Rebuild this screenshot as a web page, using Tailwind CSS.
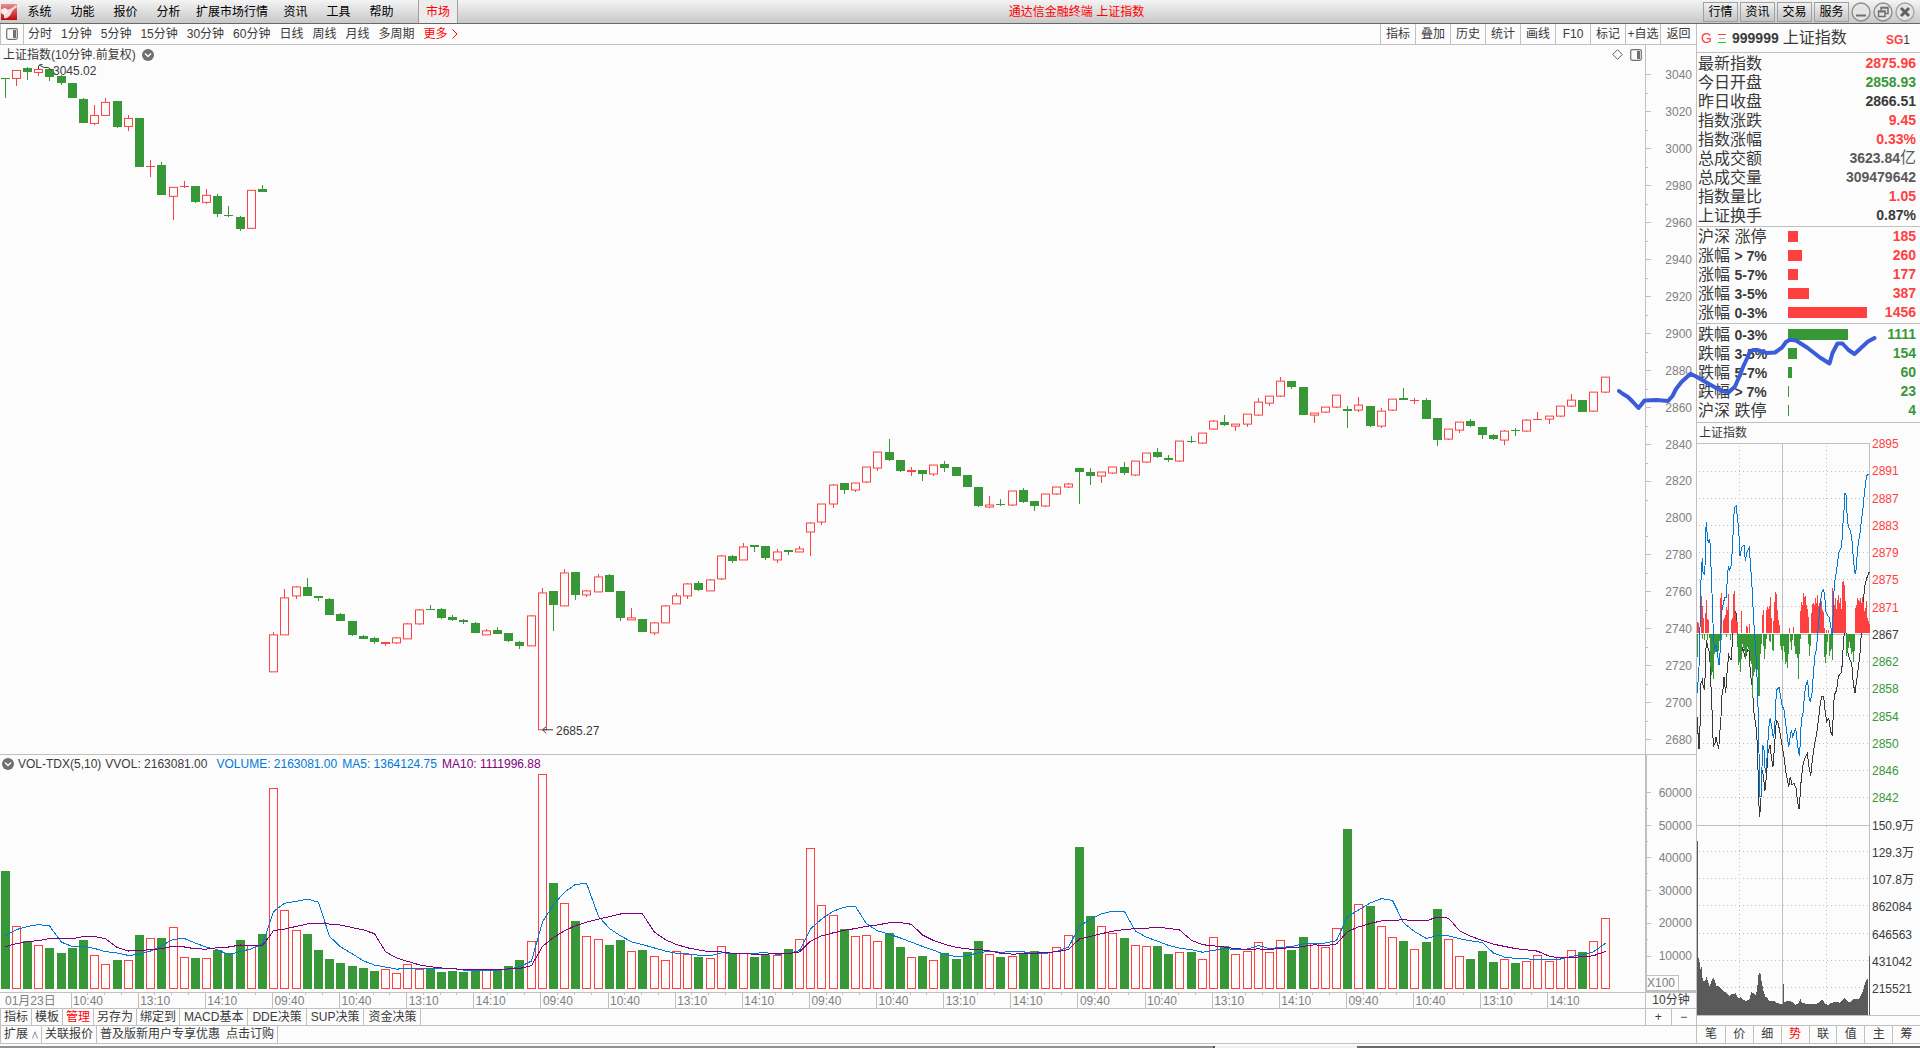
<!DOCTYPE html>
<html lang="zh-CN">
<head>
    <meta charset="UTF-8">
    <meta name="viewport" content="width=device-width, initial-scale=1.0">
    <title>通达信金融终端 上证指数</title>
    <script src="https://cdn.jsdelivr.net/npm/@tailwindcss/browser@4"></script>
    <style>
        body {
            font-family: 'Liberation Sans', 'Noto Sans CJK SC', sans-serif;
        }
    </style>
</head>
<body class="bg-[#fcfcfc] text-[#3a3a3a] text-xs leading-4 h-screen flex flex-col overflow-hidden">

    <!-- Menu bar -->
    <header class="h-6 shrink-0 flex items-center bg-linear-to-b from-[#f4f4f4] to-[#c8c8c8] border-b border-[#686868] text-black">
        <svg class="w-[18px] h-[18px] shrink-0" viewBox="0 0 18 18" role="img" aria-label="通达信">
            <defs>
                <linearGradient id="logo-bg" x1="0" y1="0" x2="0" y2="1">
                    <stop offset="0" stop-color="#e89090"/>
                    <stop offset="1" stop-color="#c00808"/>
                </linearGradient>
            </defs>
            <rect x="1" y="1" width="16" height="16" fill="url(#logo-bg)"/>
            <path d="M1 7 L5 5 Q8 9 16 2 L17 4 Q12 7 11 11 Q8 16 4 15 L4 12 L1 10 Z" fill="#f2dede"/>
            <path d="M1 6 L6 5 L8 9 L4 12 Z" fill="#fff" opacity=".6"/>
        </svg>
        <nav class="flex h-full items-center">
            <button class="w-[43px]">系统</button>
            <button class="w-[43px]">功能</button>
            <button class="w-[43px]">报价</button>
            <button class="w-[43px]">分析</button>
            <button class="w-[84px]">扩展市场行情</button>
            <button class="w-[43px]">资讯</button>
            <button class="w-[43px]">工具</button>
            <button class="w-[43px]">帮助</button>
            <button class="w-10 h-full ml-[15px] border-x border-[#a0a0a0] bg-[#ececec] text-[#ff0000]">市场</button>
        </nav>
        <h1 class="flex-1 text-center pr-2 text-[#ff0000]">通达信金融终端 上证指数</h1>
        <div class="flex items-center gap-[2px] pr-[5px]">
            <button class="w-[35px] h-5 border border-[#a0a0a0] bg-linear-to-b from-[#f0f0f0] to-[#c4c4c4]">行情</button>
            <button class="w-[35px] h-5 border border-[#a0a0a0] bg-linear-to-b from-[#f0f0f0] to-[#c4c4c4]">资讯</button>
            <button class="w-[35px] h-5 border border-[#a0a0a0] bg-linear-to-b from-[#f0f0f0] to-[#c4c4c4]">交易</button>
            <button class="w-[35px] h-5 border border-[#a0a0a0] bg-linear-to-b from-[#f0f0f0] to-[#c4c4c4]">服务</button>
            <button class="w-5 h-5" aria-label="最小化">
                <svg viewBox="0 0 20 20" fill="none" stroke="#8c8c8c">
                    <circle cx="10" cy="10" r="9" fill="#e4e4e4" stroke-width="1.4"/>
                    <path d="M5 13.5h10" stroke="#707070" stroke-width="2"/>
                </svg>
            </button>
            <button class="w-5 h-5" aria-label="还原">
                <svg viewBox="0 0 20 20" fill="none" stroke="#8c8c8c">
                    <circle cx="10" cy="10" r="9" fill="#e4e4e4" stroke-width="1.4"/>
                    <path d="M8 8.5V5.5h7v6h-3M8 6h7" stroke="#707070" stroke-width="1.5"/>
                    <path d="M5.500 9h6.500v5.500h-6.500zM5.500 9.700h6.500" stroke="#707070" stroke-width="1.5"/>
                </svg>
            </button>
            <button class="w-5 h-5" aria-label="关闭">
                <svg viewBox="0 0 20 20" fill="none" stroke="#a4a4a4">
                    <circle cx="10" cy="10" r="9" fill="#e4e4e4" stroke-width="1.4"/>
                    <path d="M6 6l8 8M14 6l-8 8" stroke="#606060" stroke-width="3"/>
                </svg>
            </button>
        </div>
    </header>

    <div class="relative flex-1 min-h-0 flex">
        <main class="flex-1 min-w-0 flex flex-col">

            <!-- Period toolbar -->
            <div class="h-[21px] shrink-0 flex items-center justify-between border-b border-[#c0c0c0]">
                <div class="flex items-center gap-[9px] h-full">
                    <button class="w-6 h-full border-x border-[#c0c0c0] flex items-center justify-center -mr-[5px]" aria-label="侧栏">
                        <svg class="w-3 h-3" viewBox="0 0 12 12"><rect x=".7" y=".7" width="10.600" height="10.600" rx="1.500" fill="none" stroke="#707070" stroke-width="1.2"/><rect x="7" y="2" width="3" height="8" fill="#707070"/></svg>
                    </button>
                    <button>分时</button>
                    <button>1分钟</button>
                    <button>5分钟</button>
                    <button>15分钟</button>
                    <button>30分钟</button>
                    <button>60分钟</button>
                    <button>日线</button>
                    <button>周线</button>
                    <button>月线</button>
                    <button>多周期</button>
                    <button class="flex items-center gap-1 text-[#ff0000]">更多
                        <svg class="w-[6px] h-[10px]" viewBox="0 0 6 10" fill="none" stroke="#ff0000"><path d="M.5.500L5 5 .5 9.500"/></svg>
                    </button>
                </div>
                <div class="flex h-full">
                    <button class="w-[35px] border-l border-[#c0c0c0]">指标</button>
                    <button class="w-[35px] border-l border-[#c0c0c0]">叠加</button>
                    <button class="w-[35px] border-l border-[#c0c0c0]">历史</button>
                    <button class="w-[35px] border-l border-[#c0c0c0]">统计</button>
                    <button class="w-[35px] border-l border-[#c0c0c0]">画线</button>
                    <button class="w-[35px] border-l border-[#c0c0c0]">F10</button>
                    <button class="w-[35px] border-l border-[#c0c0c0]">标记</button>
                    <button class="w-[35px] border-l border-[#c0c0c0] whitespace-nowrap">+自选</button>
                    <button class="w-9 border-l border-[#c0c0c0]">返回</button>
                </div>
            </div>

            <!-- Candles -->
            <section class="flex-[710] min-h-0 flex">
                <div class="relative flex-1 min-w-0">
                    <svg id="candles" class="absolute inset-0 w-full h-full" viewBox="0 45 1645 710" preserveAspectRatio="none" shape-rendering="crispEdges"></svg>
                    <div class="relative flex items-center justify-between h-[19px] pl-[3px] pr-[3px]">
                        <div class="flex items-center gap-[6px]">
                            <h2>上证指数(10分钟.前复权)</h2>
                            <svg class="w-3 h-3" viewBox="0 0 12 12"><circle cx="6" cy="6" r="6" fill="#707070"/><path d="M3 4.500l3 3 3-3" fill="none" stroke="#fff" stroke-width="1.4"/></svg>
                        </div>
                        <div class="flex items-center gap-[7px]">
                            <svg class="w-[11px] h-[11px]" viewBox="0 0 11 11"><path d="M5.500.700l4.800 4.800-4.800 4.800L.7 5.500z" fill="none" stroke="#606060"/></svg>
                            <svg class="w-3 h-3" viewBox="0 0 12 12"><rect x=".7" y=".7" width="10.600" height="10.600" rx="1.500" fill="none" stroke="#707070" stroke-width="1.2"/><rect x="7" y="2" width="3" height="8" fill="#707070"/></svg>
                        </div>
                    </div>
                    <span class="absolute left-[53px] top-[18px]">3045.02</span>
                    <span class="absolute left-[33.800%] top-[95.600%]">2685.27</span>
                </div>
                <div class="w-[51px] shrink-0 flex border-l border-[#c0c0c0]">
                    <svg id="price-ticks" class="w-[6px] h-full" viewBox="0 45 6 710" preserveAspectRatio="none" shape-rendering="crispEdges"></svg>
                    <ul id="price-labels" class="flex-1 flex flex-col justify-between items-end pt-[22px] pb-[6px] pr-[4px] text-[#808080]"></ul>
                </div>
            </section>

            <!-- Volume -->
            <section class="flex-[237] min-h-0 flex border-t border-[#c0c0c0]">
                <div class="relative flex-1 min-w-0">
                    <svg id="volumes" class="absolute inset-0 w-full h-full" viewBox="0 756 1645 236" preserveAspectRatio="none" shape-rendering="crispEdges"></svg>
                    <div class="relative flex items-center pl-[2px] pt-px whitespace-nowrap">
                        <svg class="w-3 h-3 mr-1" viewBox="0 0 12 12"><circle cx="6" cy="6" r="6" fill="#707070"/><path d="M3 4.500l3 3 3-3" fill="none" stroke="#fff" stroke-width="1.4"/></svg>
                        <span class="mr-1">VOL-TDX(5,10)</span>
                        <span class="mr-[9px]">VVOL: 2163081.00</span>
                        <span class="mr-[5px] text-[#0078d7]">VOLUME: 2163081.00</span>
                        <span class="mr-[5px] text-[#0078d7]">MA5: 1364124.75</span>
                        <span class="text-[#800080]">MA10: 1111996.88</span>
                    </div>
                </div>
                <div class="w-[51px] shrink-0 flex border-l-2 border-b-2 border-[#c0c0c0] relative">
                    <svg id="vol-ticks" class="w-[5px] h-full" viewBox="0 756 5 234" preserveAspectRatio="none" shape-rendering="crispEdges"></svg>
                    <ul id="vol-labels" class="flex-1 flex flex-col justify-between items-end pt-[30px] pb-[26px] pr-[4px] text-[#808080]"></ul>
                    <span class="absolute left-0 bottom-0 border-t border-r border-[#c0c0c0] text-[#808080] h-[15px] leading-[15px] w-8 bg-[#fcfcfc]">X100</span>
                </div>
            </section>

            <!-- Time axis -->
            <div class="h-[17px] shrink-0 flex border-y border-[#c0c0c0]">
                <div class="relative flex-1 min-w-0 text-[#808080]">
                    <svg id="time-ticks" class="absolute inset-0 w-full h-full" viewBox="0 0 1645 15" preserveAspectRatio="none" shape-rendering="crispEdges"></svg>
                    <ol id="time-labels" class="relative flex h-full items-center leading-4"></ol>
                </div>
                <button class="w-[51px] shrink-0 border-l border-[#c0c0c0] leading-[15px] whitespace-nowrap">10分钟</button>
            </div>

            <!-- Indicator templates -->
            <div class="h-[17px] shrink-0 flex justify-between border-b border-[#c0c0c0] leading-4">
                <div class="flex border-l border-[#c0c0c0]">
                    <button class="px-[3px] border-r border-[#c0c0c0]">指标</button>
                    <button class="px-[3px] border-r border-[#c0c0c0]">模板</button>
                    <button class="px-[3px] border-r border-[#c0c0c0] text-[#ff0000]">管理</button>
                    <button class="px-[3px] border-r border-[#c0c0c0]">另存为</button>
                    <button class="px-[3px] border-r border-[#c0c0c0]">绑定到</button>
                    <button class="px-1 border-r border-[#c0c0c0]">MACD基本</button>
                    <button class="px-1 border-r border-[#c0c0c0]">DDE决策</button>
                    <button class="px-1 border-r border-[#c0c0c0]">SUP决策</button>
                    <button class="px-1 border-r border-[#c0c0c0]">资金决策</button>
                </div>
                <div class="w-[51px] grid grid-cols-2">
                    <button class="border-l border-[#c0c0c0]" aria-label="放大">+</button>
                    <button class="border-l border-[#c0c0c0]" aria-label="缩小">−</button>
                </div>
            </div>

            <div class="h-[17px] shrink-0 flex border-l border-[#c0c0c0] leading-[17px]">
                <button class="px-[3px] border-r border-[#c0c0c0] flex items-center gap-1">扩展
                    <svg class="w-[6px] h-2" viewBox="0 0 6 8" fill="none" stroke="#909090"><path d="M.5 7.500L3 .8l2.500 6.700"/></svg>
                </button>
                <a href="#" class="px-[3px] border-r border-[#c0c0c0]">关联报价</a>
                <a href="#" class="px-[3px] border-r border-[#c0c0c0] flex gap-[6px]"><span>普及版新用户专享优惠</span><span>点击订购</span></a>
            </div>
        </main>

        <!-- Quote sidebar -->
        <aside class="w-56 shrink-0 flex flex-col border-l border-[#c0c0c0]">
            <div class="h-[29px] shrink-0 flex items-center border-b border-[#c0c0c0] pl-1 pr-[10px]">
                <span class="text-sm text-[#ff4040] w-[17px]">G</span>
                <svg class="w-2 h-[11px] mr-[6px]" viewBox="0 0 8 11" shape-rendering="crispEdges"><path d="M0 1.500h8" stroke="#ff4040"/><path d="M1 5.500h6" stroke="#c0a0a0"/><path d="M0 9.500h8" stroke="#00e000"/></svg>
                <span class="text-sm font-bold mr-1">999999</span>
                <span class="text-base">上证指数</span>
                <span class="ml-auto pt-1"><b class="text-[#ff4040]">SG</b>1</span>
            </div>

            <div class="shrink-0 border-b border-[#c0c0c0] pt-px pb-px">
                <table class="w-full">
                    <tbody id="quote"></tbody>
                </table>
            </div>
            <div class="shrink-0 border-b border-[#c0c0c0] pb-px">
                <table class="w-full">
                    <tbody id="risers"></tbody>
                </table>
            </div>
            <div class="shrink-0 border-b border-[#c0c0c0] pt-px pb-[2px]">
                <table class="w-full">
                    <tbody id="fallers"></tbody>
                </table>
            </div>

            <h3 class="h-5 shrink-0 pl-[2px] leading-5">上证指数</h3>
            <div class="flex-1 min-h-0 flex border-b border-[#c0c0c0]">
                <svg id="intraday" class="flex-1 min-w-0 h-full" viewBox="1697 443 173 572" preserveAspectRatio="none" shape-rendering="crispEdges"></svg>
                <ul id="intraday-labels" class="w-[50px] flex flex-col justify-between pl-[2px] pb-[18px] -mt-[7px]"></ul>
            </div>
            <div class="h-[10px] shrink-0 border-b border-[#c0c0c0]"></div>
            <div class="h-[17px] shrink-0 grid grid-cols-8 leading-[17px]">
                <button>笔</button>
                <button class="border-l border-[#c0c0c0]">价</button>
                <button class="border-l border-[#c0c0c0]">细</button>
                <button class="border-l border-[#c0c0c0] text-[#ff0000]">势</button>
                <button class="border-l border-[#c0c0c0]">联</button>
                <button class="border-l border-[#c0c0c0]">值</button>
                <button class="border-l border-[#c0c0c0]">主</button>
                <button class="border-l border-[#c0c0c0]">筹</button>
            </div>
        </aside>

        <!-- Freehand pen stroke over the chart and the sidebar -->
        <svg class="absolute inset-0 w-full h-full pointer-events-none" viewBox="0 24 1920 1019" preserveAspectRatio="none" fill="none">
            <path d="M1619 391L1623 394L1628 397L1633 402L1638.500 408L1641 405L1644.500 400.500L1657 400L1668 401L1672.500 396L1676 389L1681.500 382L1690.500 373.700L1697 377L1703 380.500L1717 388.500L1724 391.500L1729 392L1735 386.500L1740 375L1743 367L1747 358.500L1750 351.500L1753 350L1757 350L1767 353L1775 352.500L1782 347.500L1786 342L1790 339.700L1796 340.500L1807 347.500L1820 357.500L1829.500 363.500L1830.500 360L1832.500 353L1837.500 343.500L1842.500 343.500L1848.500 350L1854.500 354L1861.500 347.500L1868 341.500L1874.500 338" stroke="#3a5cd8" stroke-width="4" stroke-linejoin="round" stroke-linecap="round"/>
        </svg>
    </div>

    <footer class="h-[5px] shrink-0 border-t border-[#c0c0c0] flex flex-col justify-end">
        <div class="h-[2px] bg-[#909090] flex"><span class="w-[63.300%] border-r-2 border-[#505050]"></span><span class="w-[7.400%] bg-[#f0f0f0]"></span><span class="flex-1 bg-[#686868]"></span></div>
    </footer>

    <script>
        const RED = '#ff4040';
        const GREEN = '#389838';
        const BLUE = '#0078d7';
        const PURPLE = '#800080';
        const GRID = '#c0c0c0';

        // colour, body top, body bottom, high, low, volume top
        const bars = `
g 78 79 78 98 872|r 70 79 70 86 926|g 68 72 67 80 941|r 69 73 67 76 945|g 69 77 69 81 948|g 76 83 75 85 953
g 83 98 83 98 948|g 99 123 98 123 940|r 115 124 105 125 955|r 102 116 98 116 964|g 101 127 101 128 960|r 118 127 115 131 960
g 118 167 118 167 935|r 166 167 160 177 938|g 165 195 162 195 938|r 187 197 187 220 927|r 186 187 181 188 957|g 186 202 186 203 958
r 195 203 189 204 958|g 196 214 194 217 950|g 215 216 206 217 953|g 217 229 216 231 940|r 190 229 190 229 945|g 189 192 185 192 934
r 635 673 633 673 789|r 598 636 590 636 911|r 587 597 587 600 930|g 588 597 579 597 934|g 597 599 597 602 950|g 600 616 599 616 959
g 615 622 614 622 963|g 622 636 622 637 966|g 637 640 636 640 968|g 639 643 638 645 971|r 643 645 643 647 969|r 638 644 638 645 973
r 624 640 624 640 964|r 610 625 610 626 969|g 610 611 606 611 968|g 610 619 609 620 972|g 618 621 616 622 971|g 621 623 620 625 972
g 624 634 623 634 970|r 631 636 630 636 970|g 631 635 628 635 970|g 634 642 634 643 966|g 643 647 642 650 960|r 616 647 616 647 941
r 593 731 589 731 775|g 592 606 592 632 884|r 573 607 570 607 904|g 573 596 573 601 921|r 591 596 591 598 936|r 577 593 575 593 939
g 576 593 575 593 945|g 592 619 592 622 940|r 618 621 609 621 951|g 620 633 620 633 950|r 623 634 623 636 956|r 606 624 606 624 960
r 596 605 594 605 951|r 584 597 584 600 954|g 584 591 582 592 957|r 580 592 580 592 958|r 556 580 556 581 946|g 557 562 556 564 954
r 547 561 544 561 953|g 546 548 546 553 957|g 547 559 547 561 955|r 552 561 550 564 955|g 551 553 551 556 949|r 549 553 547 553 939
r 523 533 523 557 849|r 504 523 504 526 906|r 485 505 484 508 915|g 483 490 483 494 929|r 483 491 483 492 936|r 467 483 467 483 935
r 452 469 452 471 941|g 452 460 439 461 933|g 460 471 460 472 947|r 470 472 467 476 957|g 470 474 470 481 956|r 465 475 465 476 960
g 464 468 461 472 953|g 467 476 467 476 959|g 475 487 475 487 952|g 487 506 487 507 941|r 505 508 496 508 954|g 504 505 499 506 957
r 491 506 491 506 956|g 490 502 488 503 953|g 501 506 501 511 951|r 494 507 494 507 952|r 487 495 487 495 947|r 484 488 483 488 935
g 468 472 468 504 848|g 472 476 468 485 916|r 472 477 472 483 926|r 467 474 467 474 933|g 467 473 462 475 938|r 461 476 461 476 945
r 453 463 453 463 946|g 452 457 448 458 946|g 458 460 455 462 954|r 441 462 441 462 952|g 441 442 436 443 952|r 433 444 433 444 959
r 421 430 420 430 937|g 422 425 415 426 946|r 424 427 424 431 954|r 414 425 414 427 951|r 402 416 398 416 942|r 396 404 396 406 952
r 381 397 377 397 940|g 381 387 381 389 950|g 387 415 387 415 937|r 413 416 413 423 943|r 407 413 407 413 947|r 395 408 395 408 928
g 409 411 406 428 830|r 405 411 397 412 905|g 406 426 406 427 907|r 411 427 408 428 926|r 399 411 399 411 937|g 398 400 388 400 941
r 400 401 398 404 949|g 400 419 398 419 942|g 418 440 418 446 910|r 429 440 429 440 939|r 422 431 422 433 956|g 421 426 419 427 959
g 427 435 427 439 951|g 435 439 434 440 962|r 431 441 430 445 959|g 430 431 428 436 963|r 420 432 419 432 961|r 419 420 412 420 955
r 416 420 416 424 961|r 406 417 406 417 957|r 400 407 394 407 950|g 400 412 400 412 952|r 392 412 392 412 941|r 377 393 377 393 918`
            .trim().split(/[|\n]/).map(row => {
                const [side, ...n] = row.trim().split(' ');
                const [top, bottom, high, low, vol] = n.map(Number);
                return { side, top, bottom, high, low, vol };
            });

        const VOL_BASE = 989;
        const centerX = i => Math.floor(5.2 + 11.188 * i);

        const el = id => document.getElementById(id);
        const rect = (x, y, w, h, fill) => `<rect x="${x}" y="${y}" width="${w}" height="${h}" fill="${fill}"/>`;
        const box = (x, y, w, h, stroke) => `<rect x="${x + 0.5}" y="${y + 0.5}" width="${w - 1}" height="${Math.max(h - 1, 0.01)}" fill="#fcfcfc" stroke="${stroke}"/>`;
        const line = (points, stroke) => `<polyline points="${points}" fill="none" stroke="${stroke}"/>`;

        function drawCandles() {
            let out = '';
            bars.forEach((b, i) => {
                const x = centerX(i);
                const color = b.side === 'r' ? RED : GREEN;
                out += rect(x, b.high, 1, b.low - b.high, color);
                out += b.side === 'r' && b.bottom - b.top > 2
                    ? box(x - 4, b.top, 9, b.bottom - b.top, color)
                    : rect(x - 4, b.top, 9, b.bottom - b.top, color);
            });
            // high and low markers
            out += '<path d="M38.500 69V66l2-1.500h2M39 65l5 2.500h4l4 3" fill="none" stroke="#3a3a3a"/>';
            out += '<path d="M553 730.500H543M546 727.500l-3.500 3 3.500 3.500" fill="none" stroke="#3a3a3a"/>';
            el('candles').innerHTML = out;
        }

        function average(n, start) {
            return bars.map((b, i) => {
                let y = start[i];
                if (y === undefined) {
                    y = bars.slice(i - n + 1, i + 1).reduce((sum, v) => sum + v.vol, 0) / n;
                }
                return `${centerX(i) + 0.5},${y.toFixed(1)}`;
            }).join(' ');
        }

        function drawVolumes() {
            let out = '';
            bars.forEach((b, i) => {
                const x = centerX(i) - 4;
                out += b.side === 'r' ? box(x, b.vol, 9, VOL_BASE - b.vol, RED) : rect(x, b.vol, 9, VOL_BASE - b.vol, GREEN);
            });
            out += line(average(5, [936, 930, 927, 925]), BLUE);
            out += line(average(10, [947, 944, 942, 941, 939, 939, 939, 937, 937]), PURPLE);
            el('volumes').innerHTML = out;
        }

        function drawAxes() {
            let ticks = '';
            let labels = '';
            for (let k = 0; k < 19; k++) {
                ticks += rect(0, 74 + 37 * k, 5, 1, GRID);
                if (k < 18) ticks += rect(0, 93 + 37 * k, 2, 1, GRID);
                labels += `<li>${3040 - 20 * k}</li>`;
            }
            el('price-ticks').innerHTML = ticks;
            el('price-labels').innerHTML = labels;

            ticks = '';
            labels = '';
            for (let k = 0; k < 6; k++) {
                ticks += rect(0, Math.round(793 + 32.5 * k), 4, 1, GRID);
                if (k < 5) ticks += rect(0, Math.round(809 + 32.5 * k), 1, 1, GRID);
                labels += `<li>${60000 - 10000 * k}</li>`;
            }
            el('vol-ticks').innerHTML = ticks;
            el('vol-labels').innerHTML = labels;

            const hours = ['10:40', '13:10', '14:10', '09:40'];
            ticks = '';
            labels = `<li class="shrink-0 pl-[5px]" style="width:${71 / 16.45}%">01月23日</li>`;
            for (let k = 0; k < 23; k++) {
                const x = 71 + 67.13 * k;
                ticks += rect(Math.floor(x), 0, 1, 15, GRID);
                for (let m = 1; m < 4 && k < 22; m++) ticks += rect(Math.floor(x + 16.78 * m), 0, 1, 2, GRID);
                labels += `<li class="shrink-0 pl-[2px]" style="width:${67.13 / 16.45}%">${hours[k % 4]}</li>`;
            }
            el('time-ticks').innerHTML = ticks;
            el('time-labels').innerHTML = labels;
        }

        function fillTables() {
            const quote = [
                ['最新指数', '2875.96', 'text-[#ff4040]'],
                ['今日开盘', '2858.93', 'text-[#389838]'],
                ['昨日收盘', '2866.51', ''],
                ['指数涨跌', '9.45', 'text-[#ff4040]'],
                ['指数涨幅', '0.33%', 'text-[#ff4040]'],
                ['总成交额', '3623.84<span class="text-base leading-none font-normal">亿</span>', 'text-[#5a5a5a]'],
                ['总成交量', '309479642', 'text-[#5a5a5a]'],
                ['指数量比', '1.05', 'text-[#ff4040]'],
                ['上证换手', '0.87%', ''],
            ];
            el('quote').innerHTML = quote.map(([name, value, color]) => `
                <tr class="h-[19px] leading-[19px]">
                    <th class="text-left font-normal text-base leading-[19px] pl-px">${name}</th>
                    <td class="text-right font-bold text-sm leading-[19px] pr-1 ${color}">${value}</td>
                </tr>`).join('');

            const spread = (rows, color, fill) => rows.map(([name, range, width, count]) => `
                <tr class="h-[19px]">
                    <th class="w-[91px] text-left font-normal text-base leading-[19px] pl-px whitespace-nowrap">${name} ${/\d/.test(range) ? `<b class="text-sm leading-none">${range}</b>` : range}</th>
                    <td><div class="h-[11px] ${fill}" style="width:${width}px"></div></td>
                    <td class="text-right font-bold text-sm leading-[19px] pr-1 ${color}">${count}</td>
                </tr>`).join('');
            el('risers').innerHTML = spread([
                ['沪深', '涨停', 10, 185],
                ['涨幅', '&gt; 7%', 14, 260],
                ['涨幅', '5-7%', 10, 177],
                ['涨幅', '3-5%', 21, 387],
                ['涨幅', '0-3%', 79, 1456],
            ], 'text-[#ff4040]', 'bg-[#ff4040]');
            el('fallers').innerHTML = spread([
                ['跌幅', '0-3%', 60, 1111],
                ['跌幅', '3-5%', 9, 154],
                ['跌幅', '5-7%', 4, 60],
                ['跌幅', '&gt; 7%', 1, 23],
                ['沪深', '跌停', 1, 4],
            ], 'text-[#389838]', 'bg-[#389838]');
        }

        // offset from the open : height
        const buys = '0:11 1:10 4:37 5:27 6:15 8:20 9:33 10:14 11:13 23:35 24:40 26:13 27:15 28:18 29:26 30:23 31:39 34:13 35:15 36:39 37:42 38:20 39:12 40:11 44:22 49:7 50:6 52:9 65:18 66:23 69:23 70:26 71:24 72:27 73:36 74:15 76:12 77:31 78:41 79:39 80:23 81:13 82:8 92:5 96:6 103:22 104:31 105:28 106:40 107:36 108:37 109:28 110:24 111:16 114:20 115:29 116:30 117:28 118:35 119:30 120:38 121:27 122:30 123:33 124:32 125:23 126:21 127:5 129:3 131:3 135:45 136:29 137:28 138:35 139:24 140:33 141:38 142:30 143:35 144:24 145:51 146:52 147:48 148:32 158:25 159:28 160:35 161:33 162:32 163:35 164:30 165:36 166:31 167:22 168:25 169:32 170:15 171:12 172:9';
        const sells = '0:23 5:5 7:6 10:6 12:4 13:33 14:41 15:38 16:45 17:20 18:18 19:16 20:17 21:17 22:7 24:6 29:3 33:6 40:13 41:31 42:28 43:38 44:25 45:10 46:14 47:17 48:25 49:20 50:13 51:15 52:17 53:27 54:30 55:63 56:42 57:38 58:35 59:30 60:36 61:62 62:62 63:20 64:10 66:12 67:25 68:15 69:5 72:7 73:8 75:16 76:17 83:12 84:16 85:26 86:12 87:18 88:30 89:28 90:34 91:20 93:8 94:16 95:6 97:12 98:20 99:20 100:24 101:45 102:20 103:5 111:10 112:22 113:12 127:23 128:29 129:20 130:8 132:22 133:17 134:15 135:26 149:22 150:18 151:14 152:8 153:14 154:20 155:18 156:28 157:17';
        const lead = '52,820 53,800 57,740 59,700 60,620 62,500 65,440 67,415 69,455 73,465 75,440 77,340 79,305 82,350 85,370 88,358 91,372 93,440 96,520 99,610 103,690 108,675 112,700 117,735 120,700 123,620 126,570 130,550 135,530 138,535 142,480 145,437 149,450 154,435 158,370 161,290 165,262 169,257 172,290 176,330 180,408 186,380 192,375 196,422 201,395 208,382 213,455 217,515 220,580 225,660 230,740 234,860 237,1000 240,1130 243,1128 246,1040 248,975 252,990 256,1060 260,1030 264,960 268,905 271,895 275,920 280,955 284,930 287,850 290,810 297,802 302,830 306,855 312,870 316,900 322,950 326,980 331,950 334,930 338,950 343,935 347,925 351,960 354,985 358,1007 361,970 364,900 369,880 374,820 379,790 383,782 387,830 391,845 396,820 400,765 404,710 409,690 414,630 419,570 422,540 426,515 431,508 434,530 438,575 442,585 448,592 453,625 457,645 460,570 463,490 467,470 472,435 477,395 485,380 488,320 492,270 495,220 498,225 501,280 505,320 510,330 515,350 520,415 524,455 527,463 531,410 535,370 540,340 545,295 549,265 553,220 558,180 562,163 568,163';
        const index = '53,890 55,985 58,985 61,890 63,790 67,780 70,800 74,810 76,740 79,660 83,680 89,700 92,780 96,870 100,980 105,970 108,950 112,970 116,988 120,930 123,890 126,825 130,800 132,770 137,820 141,760 146,705 153,720 157,670 161,600 165,572 168,580 172,630 176,660 180,712 188,685 196,715 203,690 208,692 211,760 217,800 222,880 228,920 232,970 235,1080 238,1190 242,1160 246,1050 250,1065 255,1112 260,1060 264,1000 270,975 274,1010 279,1040 284,970 289,902 295,910 300,940 306,975 312,1010 318,1060 326,1100 331,1070 336,1095 342,1090 348,1105 352,1140 357,1168 361,1120 364,1075 370,1030 376,1012 382,1000 387,1040 392,1068 398,1010 404,970 410,940 416,895 421,850 426,828 431,828 435,870 440,905 446,895 452,935 457,948 460,880 463,825 470,810 475,770 485,755 489,690 494,620 498,640 502,690 508,715 515,730 520,790 525,820 530,780 536,735 541,690 544,640 547,590 551,530 555,495 560,475 568,455';
        const turnover = '291,706 291,183 294,183 294,530 298,540 302,570 305,560 308,600 315,605 319,590 323,603 329,620 334,605 341,592 345,603 350,620 356,618 362,625 370,632 380,640 388,648 395,642 407,640 414,655 422,652 430,660 440,663 448,658 454,636 460,640 468,645 473,610 476,580 481,577 485,605 490,630 496,650 502,652 508,663 520,662 530,668 540,672 549,672 549,612 552,612 552,668 562,662 575,665 585,675 597,668 601,655 605,668 620,672 640,672 655,670 665,658 675,670 685,675 695,668 705,666 720,668 728,660 733,652 738,660 748,668 760,657 778,657 785,640 790,630 795,608 800,600 804,594 804,706 807,706 807,528 810,528 810,706';

        function scalePoints(text, x0, y0) {
            return text.split(' ').map(p => {
                const [x, y] = p.split(',').map(Number);
                return `${(x0 + x / 3).toFixed(1)},${(y0 + y / 3).toFixed(1)}`;
            }).join(' ');
        }

        function drawIntraday() {
            let out = '';
            [471, 498, 525, 552, 579, 606, 661, 688, 715, 743, 770, 797, 851, 878, 905, 933, 960, 987].forEach(y => {
                out += `<path d="M1699 ${y + 0.5}H1869" stroke="${GRID}" stroke-dasharray="1 3"/>`;
            });
            [1739, 1826].forEach(x => {
                out += `<path d="M${x + 0.5} 446V1015" stroke="${GRID}" stroke-dasharray="1 3"/>`;
            });
            out += rect(1782, 443, 1, 572, GRID) + rect(1869, 443, 1, 572, GRID);
            [443, 634, 825].forEach(y => { out += rect(1697, y, 173, 1, GRID); });
            out += line(scalePoints(index, 1680, 420), '#3a3a3a');
            buys.split(' ').forEach(p => {
                const [x, h] = p.split(':').map(Number);
                out += rect(1697 + x, 633 - h, 1, h, RED);
            });
            sells.split(' ').forEach(p => {
                const [x, h] = p.split(':').map(Number);
                out += rect(1697 + x, 634, 1, h, GREEN);
            });
            out += line(scalePoints(lead, 1680, 420), BLUE);
            out += `<polygon points="${scalePoints(turnover, 1600, 780)}" fill="#5a5a5a"/>`;
            el('intraday').innerHTML = out;

            const up = [2895, 2891, 2887, 2883, 2879, 2875, 2871].map(v => `<li class="text-[#ff4040]">${v}</li>`);
            const down = [2862, 2858, 2854, 2850, 2846, 2842].map(v => `<li class="text-[#389838]">${v}</li>`);
            const vols = ['150.9万', '129.3万', '107.8万', '862084', '646563', '431042', '215521'].map(v => `<li>${v}</li>`);
            el('intraday-labels').innerHTML = [...up, '<li>2867</li>', ...down, ...vols].join('');
        }

        drawCandles();
        drawVolumes();
        drawAxes();
        fillTables();
        drawIntraday();
    </script>
</body>
</html>
